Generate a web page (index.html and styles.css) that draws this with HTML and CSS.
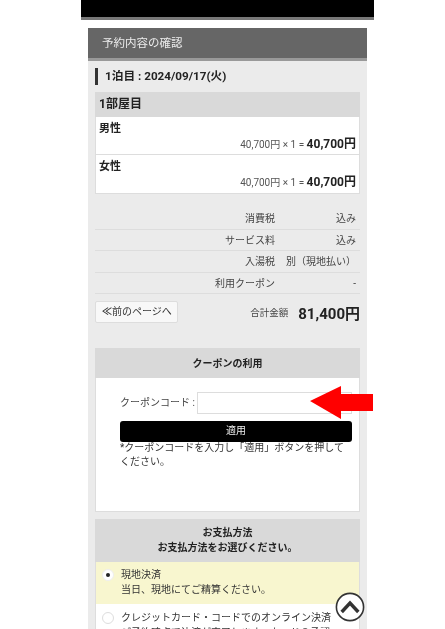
FILE: index.html
```html
<!DOCTYPE html>
<html lang="ja">
<head>
<meta charset="utf-8">
<title>予約内容の確認</title>
<link rel="stylesheet" href="styles.css">
</head>
<body>
<div class="page">
  <div class="topbar"></div>
  <main class="panel">
    <h1 class="panel-title">予約内容の確認</h1>
    <div class="panel-body">
      <h2 class="night">1泊目 : 2024/09/17(火)</h2>
      <section class="room">
        <div class="room-head">1部屋目</div>
        <div class="guest">
          <div class="guest-name">男性</div>
          <div class="guest-price">40,700円 × 1 = <b>40,700円</b></div>
        </div>
        <div class="guest">
          <div class="guest-name">女性</div>
          <div class="guest-price">40,700円 × 1 = <b>40,700円</b></div>
        </div>
      </section>
      <div class="summary">
        <div class="sum-row"><span class="sum-label">消費税</span><span class="sum-val">込み</span></div>
        <div class="sum-row"><span class="sum-label">サービス料</span><span class="sum-val">込み</span></div>
        <div class="sum-row"><span class="sum-label">入湯税</span><span class="sum-val">別（現地払い）</span></div>
        <div class="sum-row"><span class="sum-label">利用クーポン</span><span class="sum-val">-</span></div>
      </div>
      <div class="total-row">
        <a class="back-btn"><span class="chev">≪</span>前のページへ</a>
        <div class="total"><span class="total-label">合計金額</span><b class="total-val">81,400円</b></div>
      </div>
      <section class="box coupon">
        <div class="box-head">クーポンの利用</div>
        <div class="coupon-body">
          <div class="coupon-line"><label class="coupon-label">クーポンコード :</label><div class="coupon-input"></div></div>
          <div class="apply">適用</div>
          <p class="coupon-note">*クーポンコードを入力し「適用」ボタンを押してください。</p>
        </div>
      </section>
      <section class="box pay">
        <div class="box-head pay-head">お支払方法<br>お支払方法をお選びください。</div>
        <div class="pay-opt selected"><span class="radio on"><span class="radio-dot"></span></span><div>現地決済<br>当日、現地にてご精算ください。</div></div>
        <div class="pay-opt next"><span class="radio"></span><div>クレジットカード・コードでのオンライン決済<br>ご予約時点で決済が完了します。カードの承認</div></div>
      </section>
    </div>
  </main>
  <svg class="red-arrow" viewBox="0 0 63 33" aria-hidden="true"><path d="M0 15 L31 0 V8 H63 V25 H31 V33 Z" fill="#f00"/></svg>
  <svg class="to-top" viewBox="0 0 30 30" aria-hidden="true"><circle cx="15" cy="15" r="13.6" fill="#fff" stroke="#333" stroke-width="1.6"/><path d="M6.7 20 L15 11 L23.3 20" fill="none" stroke="#333" stroke-width="3.4"/></svg>
</div>
</body>
</html>
```
FILE: styles.css
```css
* { box-sizing: border-box; }
html, body { margin: 0; padding: 0; height: 100%; overflow: hidden; background: #fff; }
body { font-family: "Roboto", "Noto Sans CJK JP", sans-serif; color: #333; font-size: 10px; }
.page { position: relative; width: 293px; height: 629px; margin-left: 81px; overflow: hidden; filter: blur(0.35px); }
.topbar { height: 20px; background: #000; border-bottom: 3px solid #777; }
.panel { margin: 8px 7px 0; background: #ebebeb; }
.panel-title { margin: 0; height: 33px; padding: 5px 14px 0; background: #666; border-bottom: 3px solid #999; color: #ececec; font-size: 11.5px; font-weight: 400; line-height: 20px; }
.panel-body { padding: 7px 7px 0; }
.night { margin: 0 0 7px; height: 17px; border-left: 3px solid #333; padding-left: 7px; font-size: 11.7px; line-height: 17px; font-weight: 700; color: #222; }
.room { background: #fff; border: 1px solid #ddd; }
.room-head { height: 25px; background: #d9d9d9; margin: -1px -1px 0; padding-left: 4px; font-size: 12px; font-weight: 700; line-height: 25px; color: #222; }
.guest { height: 38px; padding: 4px 3px 0; border-bottom: 1px solid #ddd; }
.guest:last-child { border-bottom: 0; }
.guest-name { font-weight: 700; font-size: 11px; line-height: 15px; color: #222; }
.guest-price { text-align: right; font-size: 10px; line-height: 17px; color: #555; }
.guest-price b { font-size: 12px; color: #222; }
.summary { margin-top: 14px; }
.sum-row { display: flex; height: 21.6px; line-height: 21.6px; border-bottom: 1px solid #ddd; font-size: 10px; color: #444; }
.sum-label { width: 180px; text-align: right; }
.sum-val { flex: 1; text-align: right; padding-right: 4px; }
.total-row { display: flex; justify-content: space-between; align-items: center; margin-top: 7px; height: 22px; }
.back-btn { width: 83px; height: 22px; flex: none; white-space: nowrap; background: #f8f8f8; border: 1px solid #ddd; border-radius: 2px; line-height: 20px; padding-left: 6px; font-size: 10px; color: #333; }
.chev { font-weight: 700; }
.total { display: flex; align-items: center; gap: 10px; }
.total-label { font-size: 9.5px; color: #444; }
.total-val { font-size: 15px; color: #222; }
.box { background: #fff; border: 1px solid #ddd; }
.box-head { margin: -1px -1px 0; background: #d9d9d9; text-align: center; font-weight: 700; font-size: 10px; color: #222; }
.coupon { margin-top: 25px; height: 164px; }
.coupon .box-head { height: 30px; line-height: 31px; }
.coupon-body { padding: 13.5px 7px 0 24px; }
.coupon-line { display: flex; align-items: center; gap: 2px; height: 22px; }
.coupon-label { width: 75px; font-size: 10px; line-height: 22px; align-self: flex-start; color: #444; white-space: nowrap; }
.coupon-input { flex: 1; height: 22px; border: 1px solid #ddd; background: #fff; }
.apply { margin-top: 7px; height: 21px; line-height: 19px; background: #000; border-radius: 3px; color: #eee; text-align: center; font-size: 10px; }
.coupon-note { margin: -1px 0 0; font-size: 10px; line-height: 14px; color: #333; }
.pay { margin-top: 7px; }
.pay-head { height: 43px; padding-top: 7px; line-height: 14.5px; }
.pay-opt { display: flex; gap: 7px; padding: 6px 6px; height: 42px; line-height: 14.5px; color: #333; }
.next { padding-top: 7px; }
.selected { background: #f8f6cf; }
.radio { flex: none; display: flex; align-items: center; justify-content: center; width: 12px; height: 12px; margin-top: 1px; border-radius: 50%; background: #fff; border: 1px solid #ddd; }
.radio.on { border-color: #eee; }
.radio-dot { width: 4px; height: 4px; border-radius: 50%; background: #222; }
.red-arrow { position: absolute; left: 229px; top: 386px; width: 63px; height: 33px; }
.to-top { position: absolute; left: 254px; top: 592px; width: 30px; height: 30px; }
```
